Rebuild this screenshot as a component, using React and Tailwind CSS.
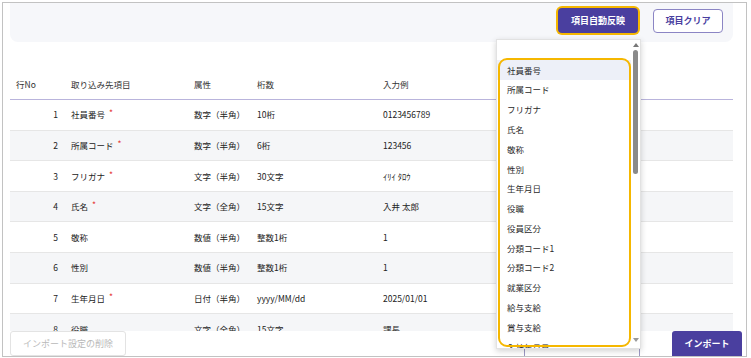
const rows = [
  { no: 1, name: '社員番号', req: true, type: '数字（半角）', len: '10桁', ex: '0123456789' },
  { no: 2, name: '所属コード', req: true, type: '数字（半角）', len: '6桁', ex: '123456' },
  { no: 3, name: 'フリガナ', req: true, type: '文字（半角）', len: '30文字', ex: 'ｲﾘｲ ﾀﾛｳ' },
  { no: 4, name: '氏名', req: true, type: '文字（全角）', len: '15文字', ex: '入井 太郎' },
  { no: 5, name: '敬称', req: false, type: '数値（半角）', len: '整数1桁', ex: '1' },
  { no: 6, name: '性別', req: false, type: '数値（半角）', len: '整数1桁', ex: '1' },
  { no: 7, name: '生年月日', req: true, type: '日付（半角）', len: 'yyyy/MM/dd', ex: '2025/01/01' },
  { no: 8, name: '役職', req: false, type: '文字（全角）', len: '15文字', ex: '課長' },
];

const options = [
  '社員番号',
  '所属コード',
  'フリガナ',
  '氏名',
  '敬称',
  '性別',
  '生年月日',
  '役職',
  '役員区分',
  '分類コード1',
  '分類コード2',
  '就業区分',
  '給与支給',
  '賞与支給',
  '入社年月日',
];

function Dropdown() {
  return (
    <div className="absolute left-[496px] top-[39px] z-20 flex h-[310px] w-[145px] overflow-hidden border border-[#e2e2e2] bg-white shadow-[0_2px_6px_rgba(0,0,0,0.18)]">
      <ul className="flex-1 overflow-hidden text-[8.5px] text-[#2a2a2a]">
        <li className="h-[20px]" />
        {options.map((o, i) => (
          <li
            key={o}
            className={`flex h-[19.8px] items-center pl-[10px] ${i === 0 ? 'bg-[#edf0f8]' : ''}`}
          >
            {o}
          </li>
        ))}
      </ul>
      <div className="flex w-[9px] flex-col items-center bg-white">
        <span className="mt-[3px] h-0 w-0 border-x-[3px] border-b-[4px] border-x-transparent border-b-[#777]" />
        <span className="mt-[3px] h-[124px] w-[5px] rounded-full bg-[#8a8a8a]" />
        <span className="flex-1" />
        <span className="mb-[6px] h-0 w-0 border-x-[3px] border-t-[4px] border-x-transparent border-t-[#999]" />
      </div>
    </div>
  );
}

export default function App() {
  return (
    <div
      className="relative h-[358px] w-[751px] overflow-hidden bg-white pl-[2px] pt-[2px]"
      style={{ fontFamily: '"Noto Sans CJK JP", "Noto Sans", sans-serif' }}
    >
      <div className="flex h-[355px] w-[745px] flex-col border border-[#c2c2c2]">
        <div className="ml-[7px] mr-[13px] flex h-[39px] shrink-0 items-start justify-end gap-[15px] rounded-b-lg bg-[#f6f7fa] pr-[10px] pt-[5px]">
          <button className="h-[25px] w-[80px] rounded-[4px] bg-[#4a3f9f] text-[9px] font-bold text-white ring-2 ring-[#f5b700]">
            項目自動反映
          </button>
          <button className="mt-[1px] h-[24px] w-[70px] rounded-[4px] border border-[#8b85c4] bg-white text-[9px] font-bold text-[#4a3f9f]">
            項目クリア
          </button>
        </div>

        <div className="ml-[7px] mr-[13px] flex-1 overflow-hidden pt-[27px] text-[8.5px] text-[#222]">
          <div className="flex h-[31px] items-center border-b border-[#b9b4dc] text-[#333]">
            <div className="w-[61px] pl-[6px]">行No</div>
            <div className="w-[123px]">取り込み先項目</div>
            <div className="w-[63px]">属性</div>
            <div className="w-[126px]">桁数</div>
            <div className="flex-1">入力例</div>
          </div>
          {rows.map((r, i) => (
            <div
              key={r.no}
              className={`flex h-[30.6px] items-center border-b border-[#e6e6e6] ${i % 2 === 1 ? 'bg-[#f5f6f8]' : 'bg-white'}`}
            >
              <div className="w-[48px] text-right">{r.no}</div>
              <div className="w-[13px]" />
              <div className="w-[123px]">
                {r.name}
                {r.req && <span className="relative -top-[2px] ml-[4px] text-[#e53935]">*</span>}
              </div>
              <div className="w-[63px]">{r.type}</div>
              <div className="w-[126px]">{r.len}</div>
              <div className="flex-1">{r.ex}</div>
            </div>
          ))}
        </div>

        <div className="relative z-10 flex h-[25px] shrink-0 items-end justify-between bg-white pl-[7px] pr-[4px]">
          <button className="h-[25px] w-[116px] rounded-[3px] border border-[#e3e3e3] bg-white text-[9px] text-[#b9b9b9]">
            インポート設定の削除
          </button>
          <button className="h-[25px] w-[70px] rounded-t-[3px] bg-[#4a3f9f] text-[9px] font-bold text-white">
            インポート
          </button>
        </div>
      </div>

      <div className="absolute left-[524px] top-[333px] z-10 h-[23px] w-[116px] border-x border-[#9c98c4]" />
      <Dropdown />
      <div className="pointer-events-none absolute left-[498px] top-[58px] z-30 h-[289px] w-[133px] rounded-[9px] border-2 border-[#f5b700]" />
    </div>
  );
}
